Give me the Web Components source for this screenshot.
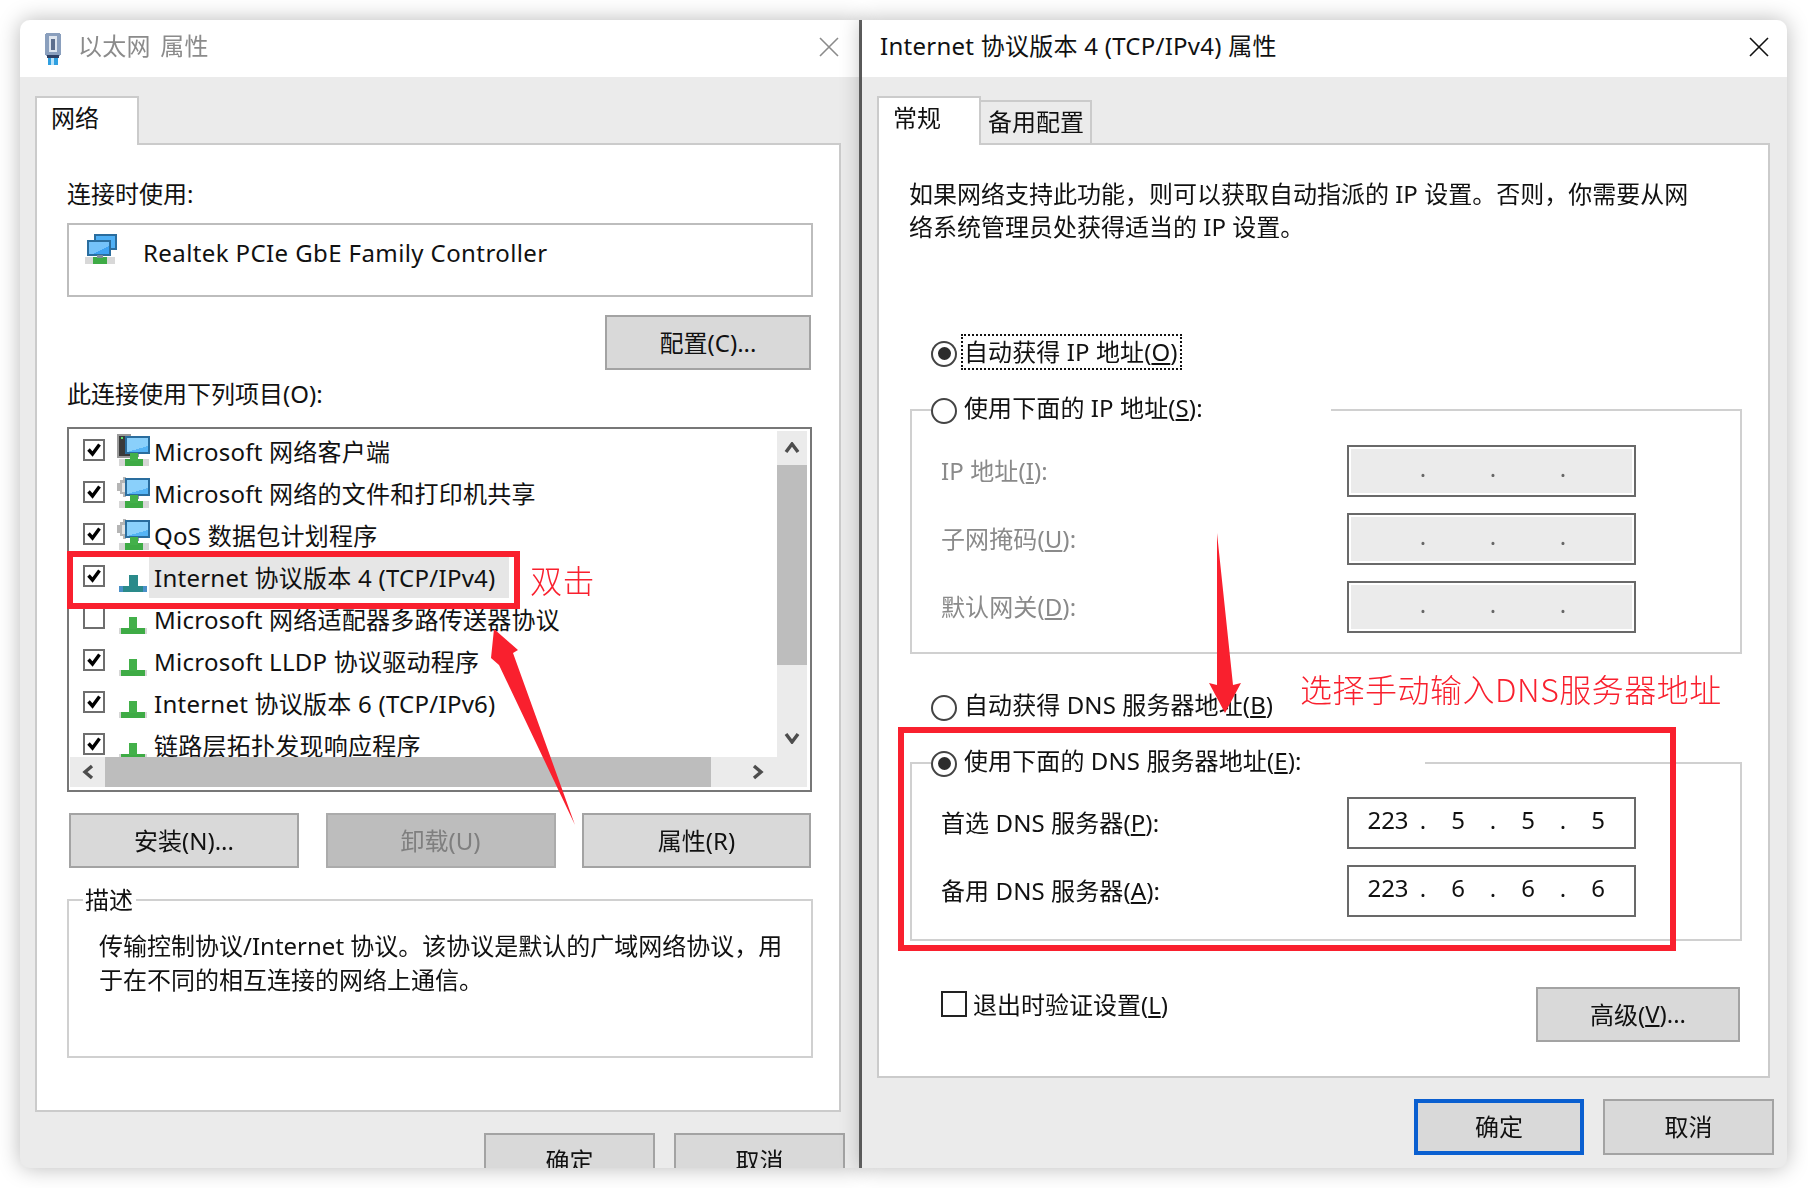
<!DOCTYPE html>
<html lang="zh">
<head>
<meta charset="utf-8">
<title>Internet 协议版本 4 属性</title>
<style>
  html, body { margin: 0; background: #fff; }
  body {
    position: relative;
    width: 1808px;
    height: 1188px;
    overflow: hidden;
    font: 24px "Noto Sans", "Noto Sans CJK SC", sans-serif;
    color: #111;
  }
  .page { display: flex; padding: 20px 0 0 20px; filter: blur(.45px); }
  .para { line-height: 33px; white-space: nowrap; }
  .top-gap { margin-top: 92px; }
</style>
</head>
<body>
<div class="page">

  <win-dialog style="--w:842px" inactive>
    <net-icon slot="icon" type="plug"></net-icon>
    <span slot="title">以太网 属性</span>
    <win-tab slot="tabs" active>网络</win-tab>

    <text-line>连接时使用:</text-line>
    <adapter-box>Realtek PCIe GbE Family Controller</adapter-box>
    <div style="display:flex;justify-content:flex-end;margin:18px 2px 0 0">
      <win-button style="width:206px">配置(C)...</win-button>
    </div>
    <text-line style="margin-top:7px">此连接使用下列项目(O):</text-line>
    <item-list style="margin-top:16px">
      <item-row checked icon="client">Microsoft 网络客户端</item-row>
      <item-row checked icon="share">Microsoft 网络的文件和打印机共享</item-row>
      <item-row checked icon="share">QoS 数据包计划程序</item-row>
      <item-row checked icon="proto-sel" selected>Internet 协议版本 4 (TCP/IPv4)</item-row>
      <item-row icon="proto">Microsoft 网络适配器多路传送器协议</item-row>
      <item-row checked icon="proto">Microsoft LLDP 协议驱动程序</item-row>
      <item-row checked icon="proto">Internet 协议版本 6 (TCP/IPv6)</item-row>
      <item-row checked icon="proto">链路层拓扑发现响应程序</item-row>
    </item-list>
    <div style="display:grid;grid-template-columns:230px 230px 229px;gap:26.5px;margin:21px 0 0 2px">
      <win-button>安装(N)...</win-button>
      <win-button disabled>卸载(U)</win-button>
      <win-button>属性(R)</win-button>
    </div>
    <group-box style="margin-top:14px" legend-left="14" legend-width="53" plain>
      <span slot="legend" style="display:block;padding:2px 0 0 2px">描述</span>
      <div class="para" style="padding:11px 0 59px 30px;line-height:34px">传输控制协议/Internet 协议。该协议是默认的广域网络协议，用<br>于在不同的相互连接的网络上通信。</div>
    </group-box>

    <win-button slot="footer" style="width:171px;height:56px">确定</win-button>
    <win-button slot="footer" style="width:171px;height:56px">取消</win-button>
  </win-dialog>

  <win-dialog style="--w:925px;z-index:2">
    <span slot="title">Internet 协议版本 4 (TCP/IPv4) 属性</span>
    <win-tab slot="tabs" active>常规</win-tab>
    <win-tab slot="tabs">备用配置</win-tab>

    <div class="para">如果网络支持此功能，则可以获取自动指派的 IP 设置。否则，你需要从网<br>络系统管理员处获得适当的 IP 设置。</div>

    <win-radio class="top-gap" checked focused style="margin-left:22px">自动获得 IP 地址(<u>O</u>)</win-radio>
    <group-box style="margin:23px 0 0 1px" legend-left="19" legend-width="400">
      <win-radio slot="legend">使用下面的 IP 地址(<u>S</u>):</win-radio>
      <ip-row disabled>IP 地址(<u>I</u>):</ip-row>
      <ip-row disabled>子网掩码(<u>U</u>):</ip-row>
      <ip-row disabled>默认网关(<u>D</u>):</ip-row>
    </group-box>

    <win-radio style="margin:35px 0 0 22px">自动获得 DNS 服务器地址(<u>B</u>)</win-radio>
    <group-box style="margin:22px 0 0 1px" legend-left="19" legend-width="494" tight>
      <win-radio slot="legend" checked>使用下面的 DNS 服务器地址(<u>E</u>):</win-radio>
      <ip-row value="223.5.5.5">首选 DNS 服务器(<u>P</u>):</ip-row>
      <ip-row value="223.6.6.6">备用 DNS 服务器(<u>A</u>):</ip-row>
    </group-box>

    <div style="display:flex;justify-content:space-between;align-items:flex-start;margin:46px 2px 0 32px">
      <win-check style="margin-top:4px">退出时验证设置(<u>L</u>)</win-check>
      <win-button style="width:204px">高级(<u>V</u>)...</win-button>
    </div>

    <win-button slot="footer" style="width:170px;height:56px" primary>确定</win-button>
    <win-button slot="footer" style="width:171px;height:56px">取消</win-button>
  </win-dialog>
</div>

<red-notes></red-notes>

<script>
  const FONT = `"Noto Sans", "Noto Sans CJK SC", sans-serif`;

  class WinDialog extends HTMLElement {
    constructor() {
      super();
      this.attachShadow({ mode: "open" }).innerHTML = `
        <style>
          :host {
            display: flex;
            flex-direction: column;
            position: relative;
            width: var(--w);
            height: 1148px;
            box-sizing: border-box;
            overflow: hidden;
            background: #ebebeb;
            box-shadow: 0 0 22px rgba(0,0,0,.28);
            border-radius: 0 10px 10px 0;
            font-family: ${FONT};
          }
          :host([inactive]) {
            border-radius: 10px 0 0 10px;
            border-right: 3px solid #666;
          }
          .title {
            display: flex;
            align-items: center;
            height: 57px;
            flex: none;
            background: #fff;
            padding: 0 18px;
            color: #111;
            letter-spacing: .26px;
          }
          :host([inactive]) .title { color: #8b8b8b; padding: 0 20px 0 25px; word-spacing: 3px; }
          .title .txt { margin-top: -8px; }
          ::slotted([slot=icon]) { margin-right: 17px; }
          :host([inactive]) .txt { margin-left: -4px; }
          .close { margin-left: auto; margin-top: -3px; }
          .close path { stroke: #111; }
          :host([inactive]) .close path { stroke: #8b8b8b; }
          .tabs {
            display: flex;
            align-items: flex-end;
            flex: none;
            height: 49px;
            margin: 19px 0 -2px 15px;
            position: relative;
            z-index: 1;
          }
          .panel {
            flex: none;
            height: 969px;
            box-sizing: border-box;
            margin: 0 18px 0 15px;
            padding: 32px 26px 0 30px;
            background: #fff;
            border: 2px solid #cbcbcb;
          }
          :host(:not([inactive])) .panel { height: 935px; margin-right: 17px; }
          .foot {
            display: flex;
            justify-content: flex-end;
            gap: 19px;
            margin-top: 21px;
            padding-right: 14px;
          }
          :host(:not([inactive])) .foot { padding-right: 13px; }
        </style>
        <div class="title">
          <slot name="icon"></slot>
          <span class="txt"><slot name="title"></slot></span>
          <svg class="close" width="20" height="20" viewBox="0 0 20 20" fill="none">
            <path d="M1 1 19 19M19 1 1 19" stroke-width="1.6"/>
          </svg>
        </div>
        <div class="tabs"><slot name="tabs"></slot></div>
        <div class="panel"><slot></slot></div>
        <div class="foot"><slot name="footer"></slot></div>`;
    }
  }

  class WinTab extends HTMLElement {
    constructor() {
      super();
      this.attachShadow({ mode: "open" }).innerHTML = `
        <style>
          :host {
            display: flex;
            align-items: center;
            box-sizing: border-box;
            height: 43px;
            margin: 0 0 2px -2px;
            padding: 0 6px 4px 7px;
            border: 2px solid #cbcbcb;
            border-bottom: 0;
            background: #ebebeb;
          }
          :host([active]) {
            height: 49px;
            width: 104px;
            margin: 0;
            padding: 0 0 10px 14px;
            background: #fff;
          }
        </style>
        <slot></slot>`;
    }
  }

  class TextLine extends HTMLElement {
    constructor() {
      super();
      this.attachShadow({ mode: "open" }).innerHTML = `
        <style>:host { display: block; height: 34px; line-height: 34px; white-space: nowrap; }</style>
        <slot></slot>`;
    }
  }

  class WinButton extends HTMLElement {
    constructor() {
      super();
      this.attachShadow({ mode: "open" }).innerHTML = `
        <style>
          :host {
            display: flex;
            align-items: center;
            justify-content: center;
            box-sizing: border-box;
            height: 55px;
            padding-bottom: 3px;
            border: 2px solid #a3a3a3;
            background: #d9d9d9;
            color: #111;
            white-space: nowrap;
          }
          :host([disabled]) { background: #bdbdbd; border-color: #ababab; color: #7f7f7f; }
          :host([primary]) { border: 4px solid #0a5fd0; }
        </style>
        <slot></slot>`;
    }
  }

  class AdapterBox extends HTMLElement {
    constructor() {
      super();
      this.attachShadow({ mode: "open" }).innerHTML = `
        <style>
          :host {
            display: flex;
            box-sizing: border-box;
            height: 74px;
            margin-top: 12px;
            padding: 9px 0 0 16px;
            border: 2px solid #bdbdbd;
            white-space: nowrap;
          }
          net-icon { margin-right: 24px; }
          span { line-height: 40px; margin-top: -1px; letter-spacing: .4px; }
        </style>
        <net-icon type="adapter"></net-icon><span><slot></slot></span>`;
    }
  }

  class WinCheck extends HTMLElement {
    constructor() {
      super();
      this.attachShadow({ mode: "open" }).innerHTML = `
        <style>
          :host { display: flex; align-items: center; white-space: nowrap; height: 26px; }
          .b {
            flex: none;
            box-sizing: border-box;
            width: 26px;
            height: 26px;
            border: 2px solid #222;
            margin-right: 6px;
            background: #fff;
          }
          span { margin-top: -2px; }
        </style>
        <div class="b"></div><span><slot></slot></span>`;
    }
  }

  class WinRadio extends HTMLElement {
    constructor() {
      super();
      const checked = this.hasAttribute("checked");
      this.attachShadow({ mode: "open" }).innerHTML = `
        <style>
          :host { display: flex; align-items: center; height: 34px; white-space: nowrap; }
          .r {
            flex: none;
            display: flex;
            align-items: center;
            justify-content: center;
            box-sizing: border-box;
            width: 26px;
            height: 26px;
            margin: 3px 7px 0 0;
            border: 2px solid #444;
            border-radius: 50%;
            background: #fff;
          }
          .r i { width: 13px; height: 13px; border-radius: 50%; background: #2c2c2c; }
          .t { padding: 0 2px 0 0; margin-top: -3px; line-height: 32px; letter-spacing: .1px; }
          :host([focused]) .t { margin: 0 0 0 -1px; padding-left: 1px; outline: 2px dotted #111; }
        </style>
        <div class="r">${checked ? "<i></i>" : ""}</div><span class="t"><slot></slot></span>`;
    }
  }

  class GroupBox extends HTMLElement {
    constructor() {
      super();
      const left = this.getAttribute("legend-left") || 0;
      const width = this.getAttribute("legend-width") || "auto";
      let pad = "17px 0 19px 29px";
      if (this.hasAttribute("tight")) pad = "16px 0 22px 29px";
      if (this.hasAttribute("plain")) pad = "0";
      this.attachShadow({ mode: "open" }).innerHTML = `
        <style>
          :host { display: block; }
          fieldset {
            margin: 0;
            padding: 0;
            border: 2px solid #d0d0d0;
            min-width: 0;
          }
          legend {
            padding: 0;
            margin-left: ${left}px;
            width: ${width}px;
            height: 36px;
            line-height: 32px;
            white-space: nowrap;
          }
          .in { display: grid; gap: 16px; padding: ${pad}; }
        </style>
        <fieldset>
          <legend><slot name="legend"></slot></legend>
          <div class="in"><slot></slot></div>
        </fieldset>`;
    }
  }

  class IpRow extends HTMLElement {
    constructor() {
      super();
      const disabled = this.hasAttribute("disabled");
      const parts = (this.getAttribute("value") || "...").split(".");
      const cells = parts.map((p, i) =>
        `<b>${p}</b>` + (i < 3 ? `<i>.</i>` : "")).join("");
      this.attachShadow({ mode: "open" }).innerHTML = `
        <style>
          :host {
            display: grid;
            grid-template-columns: 406px 289px;
            align-items: center;
            white-space: nowrap;
            color: ${disabled ? "#8a8a8a" : "#111"};
          }
          .f {
            display: flex;
            box-sizing: border-box;
            height: 52px;
            padding: 0 0 0 11px;
            border: 2px solid #696969;
            ${disabled ? "box-shadow: inset 0 0 0 2px #fff; background: #ebebeb;" : ""}
            color: ${disabled ? "#666" : "#111"};
            line-height: 42px;
          }
          b { font-weight: 400; width: 56px; text-align: center; }
          i { font-style: normal; width: 14px; text-align: center; }
          label { margin-top: -4px; letter-spacing: .1px; }
        </style>
        <label><slot></slot></label>
        <div class="f">${cells}</div>`;
    }
  }

  class ItemList extends HTMLElement {
    constructor() {
      super();
      this.attachShadow({ mode: "open" }).innerHTML = `
        <style>
          :host {
            display: grid;
            grid-template-columns: 708px 30px;
            grid-template-rows: 328px 30px;
            box-sizing: border-box;
            width: 745px;
            height: 365px;
            border: 2px solid #777;
            background: #fff;
          }
          .rows { overflow: hidden; }
          .v {
            display: flex;
            flex-direction: column;
            margin-top: 2px;
            background: #ebebeb;
          }
          .h {
            grid-column: 1 / 3;
            display: flex;
            margin-left: 1px;
            background: #ebebeb;
          }
          .arrow { flex: none; display: flex; align-items: center; justify-content: center; }
          .v .arrow { height: 34px; }
          .h .arrow { width: 35px; }
          .thumb { background: #bdbdbd; flex: none; }
          .v .thumb { height: 200px; }
          .h .thumb { width: 606px; }
          .v .down { margin-top: auto; height: 38px; }
          .h .right { margin-left: 36px; width: 22px; }
          path { fill: none; stroke: #4d4d4d; stroke-width: 3.4; }
        </style>
        <div class="rows"><slot></slot></div>
        <div class="v">
          <div class="arrow"><svg width="16" height="12"><path d="M2 10 8 2 14 10"/></svg></div>
          <div class="thumb"></div>
          <div class="arrow down"><svg width="16" height="12"><path d="M2 2 8 10 14 2"/></svg></div>
        </div>
        <div class="h">
          <div class="arrow"><svg width="12" height="16"><path d="M10 2 3 8 10 14"/></svg></div>
          <div class="thumb"></div>
          <div class="arrow right"><svg width="12" height="16"><path d="M2 2 9 8 2 14"/></svg></div>
        </div>`;
    }
  }

  class ItemRow extends HTMLElement {
    constructor() {
      super();
      const checked = this.hasAttribute("checked");
      const icon = this.getAttribute("icon");
      this.attachShadow({ mode: "open" }).innerHTML = `
        <style>
          :host {
            display: flex;
            align-items: flex-start;
            height: 42px;
            white-space: nowrap;
          }
          .c {
            flex: none;
            box-sizing: border-box;
            width: 22px;
            height: 22px;
            margin: 10px 0 0 14px;
            border: 2px solid #6e6e6e;
          }
          .c svg { display: block; }
          net-icon { margin: 5px 0 0 12px; width: 36px; flex: none; }
          .t { margin: 2px 0 0 -4px; padding: 0 13px 0 5px; height: 41px; line-height: 42px; letter-spacing: .25px; }
          :host([selected]) .t { background: #e6e6e6; }
        </style>
        <div class="c">${checked ? `<svg width="18" height="18" viewBox="0 0 18 18"><path d="M3.5 8.5 7.5 13 14.5 3.5" fill="none" stroke="#000" stroke-width="3.4"/></svg>` : ""}</div>
        <net-icon type="${icon}"></net-icon>
        <span class="t"><slot></slot></span>`;
    }
  }

  // 图标都画在一个元素里，按 type 切换
  const GREEN_T = `
    <rect x="2" y="25" width="30" height="7" fill="#d6d6d6"/>
    <rect x="8" y="25" width="18" height="7" fill="#3eab45"/>
    <rect x="13" y="19" width="8" height="8" fill="#43b04a"/>`;
  const MONITOR = `
    <rect x="16" y="19" width="6" height="4" fill="#8b9aa8"/>
    <rect x="8" y="2" width="25" height="18" fill="#2a6d9e"/>
    <rect x="10" y="4" width="21" height="14" fill="#55b4f5"/>
    <path d="M10 4h21v8L10 18z" fill="#8ad0fb"/>`;
  const ICONS = {
    plug: [20, 32, `
      <rect x="0" y="0" width="16" height="23" rx="3" fill="#8a9fbd"/>
      <rect x="4" y="3" width="8" height="16" rx="1" fill="#dfe6ef"/>
      <rect x="6" y="6" width="4" height="11" fill="#5d6f8d"/>
      <rect x="2" y="22" width="12" height="3" fill="#2d3f63"/>
      <rect x="3" y="25" width="10" height="7" fill="#2f9fe0"/>
      <rect x="6" y="25" width="3" height="7" fill="#b5e2fb"/>`],
    adapter: [34, 32, `
      <rect x="9" y="0" width="23" height="16" fill="#2a6d9e"/>
      <rect x="11" y="2" width="19" height="12" fill="#4fb0f5"/>
      <rect x="2" y="6" width="24" height="16" fill="#2a6d9e"/>
      <rect x="4" y="8" width="20" height="12" fill="#3da2f3"/>
      <path d="M4 8h20v4L8 20H4z" fill="#74c2fa"/>
      <rect x="0" y="23" width="30" height="7" fill="#d8d8d8"/>
      <rect x="8" y="23" width="14" height="7" fill="#3eab45"/>
      <rect x="12" y="21" width="6" height="3" fill="#7c8d9b"/>`],
    client: [36, 34, `
      <rect x="0" y="0" width="14" height="24" fill="#9a9a9a"/>
      <rect x="2" y="2" width="11" height="20" fill="#3a3a3a"/>
      <rect x="4" y="3" width="2" height="2" fill="#5fe06a"/>${MONITOR}${GREEN_T}`],
    share: [36, 34, `
      <path d="M3 4h3V1h3v3h4v14H9v3H6v-3H3v-3H0V7h3z" fill="#b5b5b5"/>
      <rect x="5" y="7" width="6" height="9" fill="#e4e4e4"/>${MONITOR}${GREEN_T}`],
    proto: [36, 34, `
      <rect x="2" y="26" width="28" height="6" fill="#d6d6d6"/>
      <rect x="4" y="26" width="24" height="6" fill="#3eab45"/>
      <rect x="12" y="15" width="8" height="12" fill="#43b04a"/>`],
    "proto-sel": [36, 34, `
      <rect x="2" y="26" width="28" height="6" fill="#4a90c8"/>
      <rect x="6" y="26" width="20" height="6" fill="#2a8a8a"/>
      <rect x="12" y="15" width="9" height="12" fill="#2a8a8a"/>`]
  };

  class NetIcon extends HTMLElement {
    constructor() {
      super();
      const [w, h, body] = ICONS[this.getAttribute("type")];
      this.attachShadow({ mode: "open" }).innerHTML = `
        <style>:host { display: block; flex: none; line-height: 0; } svg { display: block; shape-rendering: crispEdges; }</style>
        <svg width="${w}" height="${h}" viewBox="0 0 ${w} ${h}">${body}</svg>`;
    }
  }

  // 截图上的红色标注，盖在对话框上面
  class RedNotes extends HTMLElement {
    constructor() {
      super();
      this.attachShadow({ mode: "open" }).innerHTML = `
        <style>
          :host {
            position: absolute;
            inset: 0;
            z-index: 5;
            pointer-events: none;
            color: #f9202e;
            font: 300 32px "Noto Sans CJK SC", sans-serif;
            line-height: 40px;
            filter: blur(.35px);
          }
          .box { position: absolute; box-sizing: border-box; border: 6px solid #f9202e; }
          .txt { position: absolute; white-space: nowrap; letter-spacing: .5px; }
          svg { position: absolute; inset: 0; }
        </style>
        <div class="box" style="left:67px;top:551px;width:453px;height:58px"></div>
        <div class="box" style="left:898px;top:727px;width:778px;height:224px"></div>
        <svg width="1808" height="1188">
          <polygon fill="#f9202e" points="494,629 518,650 513,653 575,825 499,665 491,658"/>
          <polygon fill="#f9202e" points="1217,533 1233,685 1241,683 1225,713 1209,683 1217,685"/>
        </svg>
        <div class="txt" style="left:530px;top:559px">双击</div>
        <div class="txt" style="left:1300px;top:668px">选择手动输入DNS服务器地址</div>`;
    }
  }

  customElements.define("net-icon", NetIcon);
  customElements.define("win-dialog", WinDialog);
  customElements.define("win-tab", WinTab);
  customElements.define("text-line", TextLine);
  customElements.define("win-button", WinButton);
  customElements.define("adapter-box", AdapterBox);
  customElements.define("win-check", WinCheck);
  customElements.define("win-radio", WinRadio);
  customElements.define("group-box", GroupBox);
  customElements.define("ip-row", IpRow);
  customElements.define("item-list", ItemList);
  customElements.define("item-row", ItemRow);
  customElements.define("red-notes", RedNotes);
</script>
</body>
</html>
